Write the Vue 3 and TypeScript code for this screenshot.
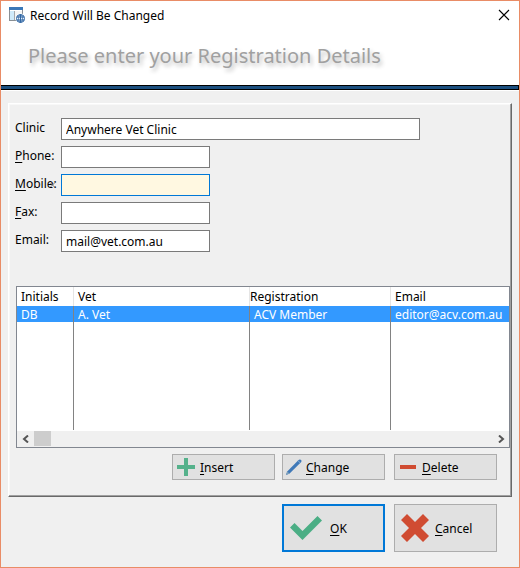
<script setup lang="ts">
import { ref } from 'vue'

interface Field {
  id: string
  key: string
  rest: string
  wide?: boolean
  active?: boolean
}

const fields: Field[] = [
  { id: 'clinic', key: '', rest: 'Clinic', wide: true },
  { id: 'phone', key: 'P', rest: 'hone:' },
  { id: 'mobile', key: 'M', rest: 'obile:', active: true },
  { id: 'fax', key: 'F', rest: 'ax:' },
  { id: 'email', key: '', rest: 'Email:' },
]

const values = ref<Record<string, string>>({
  clinic: 'Anywhere Vet Clinic',
  phone: '',
  mobile: '',
  fax: '',
  email: 'mail@vet.com.au',
})

const vets = [
  { initials: 'DB', name: 'A. Vet', registration: 'ACV Member', email: 'editor@acv.com.au' },
]
</script>

<template>
  <main class="window">
    <header class="banner">
      <div class="titlebar">
        <svg class="app-icon" width="16" height="16" viewBox="0 0 16 16" aria-hidden="true">
          <rect x="0.5" y="0.5" width="13" height="13" fill="#fff" stroke="#8a8f94" />
          <rect x="0" y="0" width="14" height="3" fill="#3a78b8" />
          <rect x="1" y="4" width="4" height="9" fill="#cfeafa" />
          <path d="M5.5 4V13" stroke="#a4a8ac" />
          <rect x="6" y="4" width="7" height="9" fill="#f4f4f4" />
          <circle cx="11.5" cy="11.5" r="5" fill="#fff" />
          <circle cx="11.5" cy="11.5" r="4" fill="#e4effa" stroke="#3267a3" />
          <path d="M7.500 10h8M7.500 13h8M11.500 7.500v8" stroke="#3267a3" fill="none" />
          <ellipse cx="11.500" cy="11.500" rx="2" ry="4" stroke="#3267a3" fill="none" stroke-width=".8" />
        </svg>
        <span class="title">Record Will Be Changed</span>
        <button class="close" type="button" aria-label="Close">
          <svg width="12" height="12" viewBox="0 0 12 12"><path d="M1 1L11 11M11 1L1 11" stroke="#000" stroke-width="1.100" /></svg>
        </button>
      </div>
      <h1>Please enter your Registration Details</h1>
    </header>
    <div class="stripe"></div>

    <form class="content" @submit.prevent>
      <section class="panel">
        <div class="fields">
          <div v-for="f in fields" :key="f.id" class="field">
            <label :for="f.id"><u v-if="f.key">{{ f.key }}</u>{{ f.rest }}
              <svg v-if="f.active" class="mark" width="5" height="6" viewBox="0 0 5 6" aria-hidden="true">
                <path d="M0.500 1L4.500 5M4.500 1L0.500 5" stroke="#777" stroke-width="1" />
              </svg>
            </label>
            <input :id="f.id" v-model="values[f.id]" type="text" :class="{ wide: f.wide, active: f.active }" />
          </div>
        </div>

        <div class="list">
          <table>
            <colgroup><col class="c-initials" /><col class="c-vet" /><col class="c-reg" /><col /></colgroup>
            <thead>
              <tr><th>Initials</th><th>Vet</th><th class="tight">Registration</th><th>Email</th></tr>
            </thead>
            <tbody>
              <tr v-for="v in vets" :key="v.initials" class="selected">
                <td>{{ v.initials }}</td><td>{{ v.name }}</td><td>{{ v.registration }}</td><td>{{ v.email }}</td>
              </tr>
              <tr class="filler"><td></td><td></td><td></td><td></td></tr>
            </tbody>
          </table>
          <div class="scrollbar">
            <button type="button" aria-label="Scroll left">
              <svg width="8" height="8" viewBox="0 0 8 8"><path d="M6 .5L2 4L6 7.500" fill="none" stroke="#555" stroke-width="2" /></svg>
            </button>
            <div class="thumb"></div>
            <button class="right" type="button" aria-label="Scroll right">
              <svg width="8" height="8" viewBox="0 0 8 8"><path d="M2 .5L6 4L2 7.500" fill="none" stroke="#555" stroke-width="2" /></svg>
            </button>
          </div>
        </div>

        <div class="row-actions">
          <button class="btn insert" type="button">
            <svg width="18" height="18" viewBox="0 0 18 18"><path d="M7 0h4v7h7v4h-7v7H7v-7H0V7h7z" fill="#55b18b" /></svg>
            <span><u>I</u>nsert</span>
          </button>
          <button class="btn change" type="button">
            <svg width="16" height="16" viewBox="0 0 16 16">
              <path d="M0 16L1.200 12.500L12.300 1.200Q13.500 0 14.700 .7Q16.200 1.700 15 3.200L3.600 14.600Z" fill="#3f79b8" />
              <path d="M0 16L1.200 12.500L3.600 14.600Z" fill="#7f9fba" />
              <path d="M12 1.700L14.300 4" stroke="#9dbddc" stroke-width=".8" />
            </svg>
            <span><u>C</u>hange</span>
          </button>
          <button class="btn delete" type="button">
            <svg width="16" height="4" viewBox="0 0 16 4"><rect width="16" height="4" fill="#d04c32" /></svg>
            <span><u>D</u>elete</span>
          </button>
        </div>
      </section>

      <footer class="dialog-actions">
        <button class="btn big ok" type="submit">
          <svg width="32" height="24" viewBox="0 0 32 24"><path d="M0 11.500L4.500 7L12.500 15L27.500 0L32 4.500L12.500 24Z" fill="#4bae85" /></svg>
          <span><u>O</u>K</span>
        </button>
        <button class="btn big cancel" type="button">
          <svg width="28" height="28" viewBox="0 0 28 28"><path d="M6 0L14 8L22 0L28 6L20 14L28 22L22 28L14 20L6 28L0 22L8 14L0 6Z" fill="#d04c32" /></svg>
          <span><u>C</u>ancel</span>
        </button>
      </footer>
    </form>
  </main>
</template>

<style>
body {
  background: #f0f0f0;
}
</style>

<style scoped>
* {
  box-sizing: border-box;
}
.window {
  min-height: 100vh;
  border: 1px solid #e98c66;
  background: #f0f0f0;
  color: #000;
  font: 12px/16px "Noto Sans", "Open Sans", sans-serif;
  display: flex;
  flex-direction: column;
}
button,
input {
  font: inherit;
  color: inherit;
}
u {
  text-underline-offset: 2px;
}
.banner {
  background: #fff;
  height: 84px;
}
.titlebar {
  display: flex;
  align-items: center;
  height: 28px;
  padding: 0 9px 0 8px;
  gap: 5px;
}
.title {
  padding-top: 2px;
}
.close {
  margin-left: auto;
  padding: 0;
  border: 0;
  background: none;
  display: flex;
}
h1 {
  margin: 13px 27px 0;
  font: 400 20px/28px "Noto Sans", sans-serif;
  color: #a0a0a0;
  text-shadow: 2px 3px 4px #bbb;
  white-space: nowrap;
}
.stripe {
  height: 5px;
  background: #1c5080;
  border: solid #000;
  border-width: 1px 1px 1px 0;
  box-shadow: 0 1px #fff;
}
.content {
  padding: 13px 7px 15px;
}
.panel {
  border: 1px solid;
  border-color: #fff #696969 #696969 #fff;
  box-shadow: inset -1px -1px #a0a0a0, inset 1px 1px #f8f8f8;
  padding: 14px 1px 16px 7px;
}
.fields {
  display: flex;
  flex-direction: column;
  gap: 6px;
}
.field {
  display: flex;
  height: 22px;
}
label {
  position: relative;
  flex: none;
  width: 45px;
  padding-top: 2px;
  margin-left: -1px;
  margin-right: 1px;
}
.mark {
  position: absolute;
  left: 35px;
  top: 8px;
}
input {
  width: 149px;
  height: 22px;
  padding: 1px 4px 0;
  border: 1px solid #7a7a7a;
  border-radius: 0;
  background: #fff;
  outline: none;
}
input.wide {
  flex: 0 1 359px;
}
input.active {
  border-color: #0078d7;
  background: #fff8e1;
}
.list {
  margin-top: 34px;
  border: 1px solid #828790;
  background: #fff;
}
table {
  width: 100%;
  table-layout: fixed;
  border-collapse: separate;
  border-spacing: 0;
}
.c-initials {
  width: 57px;
}
.c-vet {
  width: 176px;
}
.c-reg {
  width: 141px;
}
th,
td {
  padding: 0 0 0 4px;
  text-align: left;
  font-weight: 400;
  white-space: nowrap;
  border-right: 1px solid #828282;
}
th {
  height: 19px;
  border-right-color: #e5e5e5;
}
th.tight {
  padding-left: 0;
}
th:last-child,
td:last-child {
  border-right: 0;
}
.selected td {
  height: 16px;
  line-height: 14px;
  padding-top: 2px;
  background: #3399ff;
  color: #fff;
}
.filler td {
  height: 108px;
}
.scrollbar {
  display: flex;
  height: 16px;
  margin-top: 1px;
  background: #f0f0f0;
}
.scrollbar button {
  display: flex;
  align-items: center;
  justify-content: center;
  width: 17px;
  padding: 0;
  border: 0;
  background: none;
}
.scrollbar .right {
  margin-left: auto;
}
.thumb {
  width: 17px;
  height: 15px;
  background: #cdcdcd;
}
.row-actions,
.dialog-actions {
  display: flex;
  justify-content: flex-end;
}
.row-actions {
  padding: 6px 13px 0 0;
}
.dialog-actions {
  padding: 7px 15px 0 0;
}
.btn {
  display: flex;
  align-items: center;
  width: 103px;
  height: 26px;
  padding: 0 4px;
  gap: 5px;
  border: 1px solid #adadad;
  background: #e1e1e1;
}
.btn span {
  padding-top: 2px;
}
.change {
  margin-left: 7px;
  padding-left: 3px;
  gap: 4px;
}
.delete {
  margin-left: 9px;
  padding-left: 5px;
  gap: 6px;
}
.big {
  height: 48px;
  padding: 0 6px;
  gap: 8px;
}
.cancel {
  margin-left: 9px;
  gap: 6px;
}
.ok {
  border: 2px solid #0078d7;
}
</style>
